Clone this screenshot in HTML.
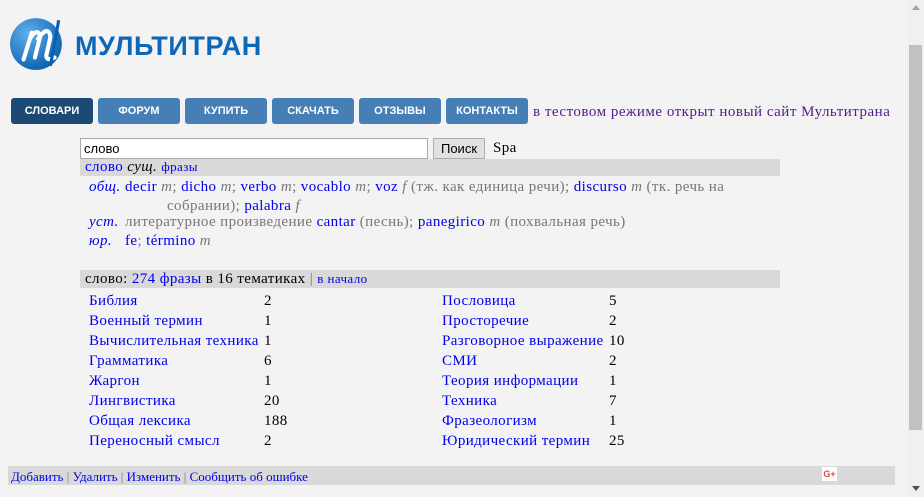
<!DOCTYPE html>
<html><head><meta charset="utf-8"><style>
body{margin:0;width:924px;height:497px;overflow:hidden;background:#f4f3f3;font-family:"Liberation Serif","Times New Roman","Noto Serif","DejaVu Serif",serif;font-size:15px;position:relative;letter-spacing:0.4px}
a{color:#0000ee;text-decoration:none}
.abs{position:absolute}
.btn{position:absolute;top:98px;width:82px;height:26px;background:#457fb6;border-radius:3px;color:#fff;font:bold 11px "Liberation Sans",sans-serif;text-align:center;line-height:26px;letter-spacing:0}
.g{color:#777}
i.b{color:#0000ee}
.bar{position:absolute;background:#d9d9d9}
.t div{position:absolute;white-space:nowrap}
</style></head><body>
<svg class="abs" style="left:9px;top:14px" width="58" height="58" viewBox="0 0 56 56">
<defs><radialGradient id="g" cx="35%" cy="30%" r="75%"><stop offset="0" stop-color="#5fb0ee"/><stop offset="1" stop-color="#0b5fae"/></radialGradient></defs>
<circle cx="26" cy="29" r="25" fill="url(#g)"/>
<path d="M14 44 L22 18 M20 24 Q28 12 30 22 L25 42 M28 24 Q38 10 40 22 L36 40 Q36 46 44 42" stroke="#fff" stroke-width="4" fill="none" stroke-linecap="round"/>
<path d="M48 6 L40 50" stroke="#0b5fae" stroke-width="3"/>
</svg>
<div class="abs" style="left:75px;top:31px;font:bold 27px 'Liberation Sans',sans-serif;color:#0d67b8;letter-spacing:0.6px">МУЛЬТИТРАН</div>
<div class="btn" style="left:11px;background:#1d4a74">СЛОВАРИ</div>
<div class="btn" style="left:98px">ФОРУМ</div>
<div class="btn" style="left:185px">КУПИТЬ</div>
<div class="btn" style="left:272px">СКАЧАТЬ</div>
<div class="btn" style="left:359px">ОТЗЫВЫ</div>
<div class="btn" style="left:446px">КОНТАКТЫ</div>
<div class="abs" style="left:533px;top:104px;color:#551a8b;letter-spacing:0.5px">в тестовом режиме открыт новый сайт Мультитрана</div>
<div class="abs" style="left:80px;top:138px;background:#fff;border:1px solid #aaa;font:13px 'Liberation Sans','DejaVu Sans',sans-serif;line-height:19px;padding-left:3px;box-sizing:border-box;width:348px;height:21px;letter-spacing:0">слово</div>
<div class="abs" style="left:433px;top:138px;width:52px;height:21px;background:#e1e1e1;border:1px solid #adadad;box-sizing:border-box;font:13px 'Liberation Sans','DejaVu Sans',sans-serif;text-align:center;line-height:19px;letter-spacing:0">Поиск</div>
<div class="abs" style="left:493px;top:140px">Spa</div>
<div class="bar" style="left:80px;top:159px;width:700px;height:17px"></div>
<div class="abs" style="left:85px;top:159px"><a>слово</a> <i>сущ.</i> <a style="font-size:13px">фразы</a></div>
<div class="abs" style="left:89px;top:178px;line-height:19px"><i class="b">общ.</i></div>
<div class="abs g" style="left:125px;top:178px;width:650px;line-height:19px"><a>decir</a> <i>m</i>; <a>dicho</a> <i>m</i>; <a>verbo</a> <i>m</i>; <a>vocablo</a> <i>m</i>; <a>voz</a> <i>f</i> (тж. как единица речи); <a>discurso</a> <i>m</i> (тк. речь на<br><span style="padding-left:42px">собрании); <a>palabra</a> <i>f</i></span></div>
<div class="abs" style="left:89px;top:214px"><i class="b">уст.</i></div>
<div class="abs g" style="left:125px;top:214px">литературное произведение <a>cantar</a> (песнь); <a>panegirico</a> <i>m</i> (похвальная речь)</div>
<div class="abs" style="left:89px;top:233px"><i class="b">юр.</i></div>
<div class="abs g" style="left:125px;top:233px"><a>fe</a>; <a>término</a> <i>m</i></div>
<div class="bar" style="left:80px;top:270px;width:700px;height:18px"></div>
<div class="abs" style="left:85px;top:271px">слово: <a>274 фразы</a> в 16 тематиках <span class="g">|</span> <a style="font-size:13px">в начало</a></div>
<div class="t">
<div style="left:89px;top:291px;line-height:20px"><a>Библия</a><br><a>Военный термин</a><br><a>Вычислительная техника</a><br><a>Грамматика</a><br><a>Жаргон</a><br><a>Лингвистика</a><br><a>Общая лексика</a><br><a>Переносный смысл</a></div>
<div style="left:264px;top:291px;line-height:20px">2<br>1<br>1<br>6<br>1<br>20<br>188<br>2</div>
<div style="left:442px;top:291px;line-height:20px"><a>Пословица</a><br><a>Просторечие</a><br><a>Разговорное выражение</a><br><a>СМИ</a><br><a>Теория информации</a><br><a>Техника</a><br><a>Фразеологизм</a><br><a>Юридический термин</a></div>
<div style="left:609px;top:291px;line-height:20px">5<br>2<br>10<br>2<br>1<br>7<br>1<br>25</div>
</div>
<div class="bar" style="left:8px;top:466px;width:887px;height:19px"></div>
<div class="abs g" style="left:11px;top:469px;font-size:13px;letter-spacing:0"><a>Добавить</a> | <a>Удалить</a> | <a>Изменить</a> | <a>Сообщить об ошибке</a></div>
<div class="abs" style="left:822px;top:467px;width:15px;height:14px;background:#fff;color:#dd4b39;font:bold 9px 'Liberation Sans',sans-serif;text-align:center;line-height:14px;letter-spacing:0">G+</div>
<div class="abs" style="left:907px;top:0;width:17px;height:497px;background:#f0f0f0"></div>
<div class="abs" style="left:909px;top:45px;width:13px;height:385px;background:#c1c1c1"></div>
<div class="abs" style="left:912px;top:486px;width:0;height:0;border-left:4px solid transparent;border-right:4px solid transparent;border-top:5px solid #505050"></div>
<div class="abs" style="left:912px;top:5px;width:0;height:0;border-left:4px solid transparent;border-right:4px solid transparent;border-bottom:5px solid #a3a3a3"></div>
</body></html>
